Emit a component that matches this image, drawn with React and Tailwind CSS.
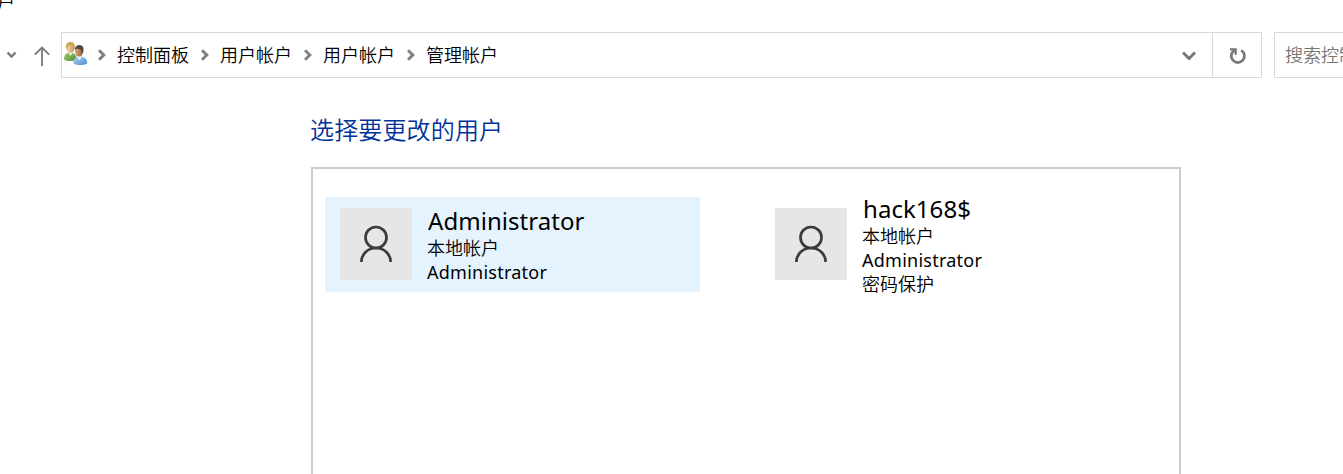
const CJK = "font-['Noto_Sans','Noto_Sans_CJK_SC',sans-serif]";

function Chevron() {
  return (
    <svg viewBox="0 0 8 12" className="h-3 w-2 shrink-0" fill="none" stroke="#808080" strokeWidth="3">
      <path d="M1 1.2 5.8 6 1 10.8" />
    </svg>
  );
}

function UsersIcon() {
  return (
    <svg viewBox="0 0 24 24" className="h-6 w-6 shrink-0">
      <defs>
        <linearGradient id="green" x1="0" y1="0" x2="1" y2="1">
          <stop offset="0" stopColor="#a5cf72" />
          <stop offset="1" stopColor="#4f8b2c" />
        </linearGradient>
        <linearGradient id="blue" x1="0" y1="0" x2="1" y2="1">
          <stop offset="0" stopColor="#a9d3f5" />
          <stop offset="1" stopColor="#4f8fc9" />
        </linearGradient>
        <linearGradient id="skin" x1="0" y1="0" x2="1" y2="0">
          <stop offset="0" stopColor="#f3d7ae" />
          <stop offset="1" stopColor="#c59660" />
        </linearGradient>
        <linearGradient id="tan" x1="0" y1="0" x2="1" y2="0">
          <stop offset="0" stopColor="#d9a878" />
          <stop offset="1" stopColor="#94603a" />
        </linearGradient>
      </defs>
      <path d="M0 17.500C0 12.500 2 10.500 6 10.500s6.500 2 6.500 7.500C9 19.500 3 19.500 0 17.500Z" fill="url(#green)" />
      <path d="m4.500 10.500 2 3.500 2.300-3.500Z" fill="#f0f4e8" />
      <ellipse cx="6.600" cy="6" rx="4.100" ry="5" fill="url(#skin)" />
      <path d="M2 6C1.500 2 3.500 0 6.500 0s5 2 4.300 5.500C9 2.800 6 2.500 3.600 4.300L3.300 8Z" fill="#c4a94d" />
      <path d="M9.500 21.500c0-5 2.500-7 6.500-7s7.200 2 7.200 7c-4 2-10.200 2-13.700 0Z" fill="url(#blue)" />
      <path d="m13 14.500 2.500 4 2.500-4Z" fill="#eef6ff" />
      <ellipse cx="15" cy="9.600" rx="4" ry="5" fill="url(#tan)" />
      <path d="M10.800 7.500C10.800 4.500 13 3 15.500 3c3.500 0 4.700 3 3.700 7.500l-1.200 1C18 8 16.500 6.500 13 6.700Z" fill="#51483f" />
    </svg>
  );
}

function Crumb({ children }) {
  return (
    <>
      <Chevron />
      <span className="ml-[11px] mr-[12px] w-[72px] whitespace-nowrap font-[350]">{children}</span>
    </>
  );
}

function AddressBar() {
  return (
    <div className="flex h-[46px] items-center text-[18px] leading-6 text-black">
      <svg viewBox="0 0 10 8" className="ml-[6px] h-2 w-[11px] shrink-0" fill="none" stroke="#777" strokeWidth="2.300">
        <path d="m1 1.500 4 4 4-4" />
      </svg>
      <svg viewBox="0 0 16 20" className="ml-[17px] mt-px h-5 w-4 shrink-0" fill="none" stroke="#777" strokeWidth="1.800">
        <path d="M8 20V1.500M.8 8.700 8 1.500l7.200 7.200" />
      </svg>
      <div className="ml-[11px] flex h-[46px] w-[1201px] shrink-0 border border-[#d9d9d9]">
        <div className="flex flex-1 items-center pl-[2px]">
          <div className="mb-[3px] mr-[10px]">
            <UsersIcon />
          </div>
          <Crumb>控制面板</Crumb>
          <Crumb>用户帐户</Crumb>
          <Crumb>用户帐户</Crumb>
          <Crumb>管理帐户</Crumb>
        </div>
        <div className="flex w-[46px] items-center justify-center">
          <svg viewBox="0 0 14 10" className="mt-[2px] h-[10px] w-[14px]" fill="none" stroke="#777" strokeWidth="3">
            <path d="m1 1.500 6 6 6-6" />
          </svg>
        </div>
        <div className="flex w-[49px] items-center justify-center border-l border-[#d9d9d9] pl-[2px]">
          <svg viewBox="0 0 18 18" className="mt-px h-[18px] w-[18px]" fill="none" stroke="#777" strokeWidth="2.700">
            <path d="M12.200 3.300A6.600 6.600 0 1 1 5.500 3.300" />
            <path d="M1 2.300h5.700v5.500" strokeWidth="2.200" />
          </svg>
        </div>
      </div>
      <div className="ml-3 flex h-[46px] flex-1 items-center overflow-hidden border border-r-0 border-[#d9d9d9] pl-[10px] text-[#767676]">
        <span className="whitespace-nowrap font-[350]">搜索控制面板</span>
      </div>
    </div>
  );
}

function Avatar() {
  return (
    <div className="mt-[11px] h-[72px] w-[72px] shrink-0 bg-[#e6e6e6]">
      <svg viewBox="0 0 72 72" className="h-full w-full" fill="none" stroke="#3b3b3b" strokeWidth="2.700">
        <circle cx="36" cy="29.500" r="10.500" />
        <path d="M21.400 54v-.2a14.600 13.800 0 0 1 29.200 0v.2" />
      </svg>
    </div>
  );
}

function Account({ name, lines, selected }) {
  return (
    <div className={`flex h-[95px] w-[375px] pl-[15px] ${selected ? 'bg-[#e5f3ff]' : ''}`}>
      <Avatar />
      <div className={`ml-[15px] text-[18px] leading-6 text-black ${selected ? 'pt-[9px]' : '-mt-[3px]'}`}>
        <div className="h-[30px] pl-px text-[24px] leading-[30px] tracking-[0.05px]">{name}</div>
        {lines.map((line) => (
          <div key={line} className={line === 'Administrator' ? 'h-6 tracking-[0.25px]' : 'h-6 font-[350]'}>
            {line}
          </div>
        ))}
      </div>
    </div>
  );
}

export default function App() {
  return (
    <div className={`h-[474px] w-[1343px] overflow-hidden bg-white ${CJK}`}>
      <div className="flex h-8 items-start overflow-hidden">
        <span className="-ml-[3px] -mt-[10px] text-[18px] font-[350] leading-6 text-black">户</span>
      </div>
      <AddressBar />
      <main className="ml-[311px] w-[870px]">
        <h1 className="-ml-px pt-[36px] text-[24px] font-[350] leading-[32px] tracking-[0.15px] text-[#003399]">选择要更改的用户</h1>
        <div className="mt-[21px] flex h-[400px] gap-[60px] border-2 border-[#cccccc] pl-3 pt-7">
          <Account name="Administrator" lines={['本地帐户', 'Administrator']} selected />
          <Account name="hack168$" lines={['本地帐户', 'Administrator', '密码保护']} />
        </div>
      </main>
    </div>
  );
}
